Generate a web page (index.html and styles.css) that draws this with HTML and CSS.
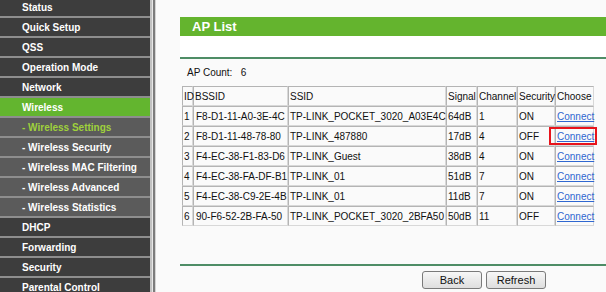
FILE: index.html
```html
<!DOCTYPE html>
<html>
<head>
<meta charset="utf-8">
<link rel="stylesheet" href="styles.css">
</head>
<body>
<div class="page">
  <nav class="sidebar">
    <div class="item first">Status</div>
    <div class="item">Quick Setup</div>
    <div class="item">QSS</div>
    <div class="item">Operation Mode</div>
    <div class="item">Network</div>
    <div class="item active">Wireless</div>
    <div class="item sub current">- Wireless Settings</div>
    <div class="item sub">- Wireless Security</div>
    <div class="item sub">- Wireless MAC Filtering</div>
    <div class="item sub">- Wireless Advanced</div>
    <div class="item sub">- Wireless Statistics</div>
    <div class="item">DHCP</div>
    <div class="item">Forwarding</div>
    <div class="item">Security</div>
    <div class="item">Parental Control</div>
  </nav>
  <div class="rail"></div>
  <main class="main">
    <div class="title">AP List</div>
    <div class="band"></div>
    <div class="rule"></div>
    <div class="count">AP Count:&nbsp;&nbsp; 6</div>
    <table class="aps">
      <thead>
        <tr>
          <th class="c-id">ID</th>
          <th class="c-bssid">BSSID</th>
          <th class="c-ssid">SSID</th>
          <th class="c-sig">Signal</th>
          <th class="c-ch">Channel</th>
          <th class="c-sec">Security</th>
          <th class="c-cho">Choose</th>
        </tr>
      </thead>
      <tbody>
        <tr><td>1</td><td>F8-D1-11-A0-3E-4C</td><td>TP-LINK_POCKET_3020_A03E4C</td><td>64dB</td><td>1</td><td>ON</td><td><a href="#">Connect</a></td></tr>
        <tr><td>2</td><td>F8-D1-11-48-78-80</td><td>TP-LINK_487880</td><td>17dB</td><td>4</td><td>OFF</td><td class="marked"><a href="#">Connect</a><span class="redbox"></span></td></tr>
        <tr><td>3</td><td>F4-EC-38-F1-83-D6</td><td>TP-LINK_Guest</td><td>38dB</td><td>4</td><td>ON</td><td><a href="#">Connect</a></td></tr>
        <tr><td>4</td><td>F4-EC-38-FA-DF-B1</td><td>TP-LINK_01</td><td>51dB</td><td>7</td><td>ON</td><td><a href="#">Connect</a></td></tr>
        <tr><td>5</td><td>F4-EC-38-C9-2E-4B</td><td>TP-LINK_01</td><td>11dB</td><td>7</td><td>ON</td><td><a href="#">Connect</a></td></tr>
        <tr><td>6</td><td>90-F6-52-2B-FA-50</td><td>TP-LINK_POCKET_3020_2BFA50</td><td>50dB</td><td>11</td><td>OFF</td><td><a href="#">Connect</a></td></tr>
      </tbody>
    </table>
    <div class="rule bottom"></div>
    <div class="buttons">
      <button class="btn">Back</button>
      <button class="btn">Refresh</button>
    </div>
  </main>
</div>
</body>
</html>
```

FILE: styles.css
```css
html, body {
  margin: 0;
  padding: 0;
  width: 606px;
  height: 292px;
  overflow: hidden;
  background: #fafafa;
  font-family: "Liberation Sans", Arial, sans-serif;
}

.page {
  display: flex;
  height: 292px;
}

.sidebar {
  width: 150px;
  flex: none;
  background: #3d3d3d;
  display: flex;
  flex-direction: column;
}

.item {
  height: 18px;
  line-height: 19px;
  border-bottom: 2px solid #8e8e8e;
  padding-left: 22px;
  color: #ffffff;
  font-size: 10px;
  font-weight: bold;
  background: #3d3d3d;
  white-space: nowrap;
}

.item.first {
  margin-top: -2px;
}

.item.active {
  background: #63b52f;
}

.item.sub {
  background: #5b5b5b;
}

.item.current {
  color: #9fd13c;
}

.rail {
  width: 6px;
  flex: none;
  background: linear-gradient(to right, #c2c2c2 0, #c2c2c2 2px, #e8e8e8 2px, #e8e8e8 3px, #7c7c7c 3px, #7c7c7c 5px, #d4d4d4 5px);
}

.main {
  flex: 1;
  padding: 17px 0 0 24px;
  background: #fafafa;
}

.title {
  height: 19px;
  line-height: 20px;
  background: #64b42e;
  color: #ffffff;
  font-size: 13px;
  font-weight: bold;
  padding-left: 12px;
}

.band {
  height: 21px;
  background: #ffffff;
}

.rule {
  height: 2px;
  background: #4e8d66;
}

.count {
  font-size: 10px;
  line-height: 12px;
  padding: 8px 0 7px 7px;
  color: #111;
}

.aps {
  margin-left: 2px;
  width: 412px;
  table-layout: fixed;
  border-collapse: separate;
  border-spacing: 0;
  font-size: 10px;
  color: #111;
}

.aps th, .aps td {
  box-sizing: border-box;
  height: 20px;
  padding: 0 1px;
  text-align: left;
  font-weight: normal;
  white-space: nowrap;
  overflow: visible;
  border-top: 1px solid #b4b4b4;
  border-left: 1px solid #b4b4b4;
  border-right: 1px solid #d8d8d8;
  border-bottom: 1px solid #d8d8d8;
}

.aps td:nth-child(2) { padding-left: 2px; }

.c-id { width: 11px; }
.c-bssid { width: 95px; }
.c-ssid { width: 158px; }
.c-sig { width: 31px; }
.c-ch { width: 40px; }
.c-sec { width: 38px; }
.c-cho { width: 39px; }

.aps a {
  color: #2f67d0;
  text-decoration: underline;
}

.marked {
  position: relative;
}

.redbox {
  position: absolute;
  top: 0;
  bottom: 0;
  left: -7px;
  right: -4px;
  border: 2px solid #e8141c;
}

.rule.bottom {
  margin-top: 38px;
}

.buttons {
  display: flex;
  gap: 4px;
  padding: 5px 0 0 242px;
}

.btn {
  width: 60px;
  height: 18px;
  padding: 0;
  font-family: "Liberation Sans", Arial, sans-serif;
  font-size: 11px;
  color: #111;
  border: 1px solid #7a7a7a;
  border-radius: 3px;
  background: linear-gradient(#f7f7f7, #dedede);
}
```
